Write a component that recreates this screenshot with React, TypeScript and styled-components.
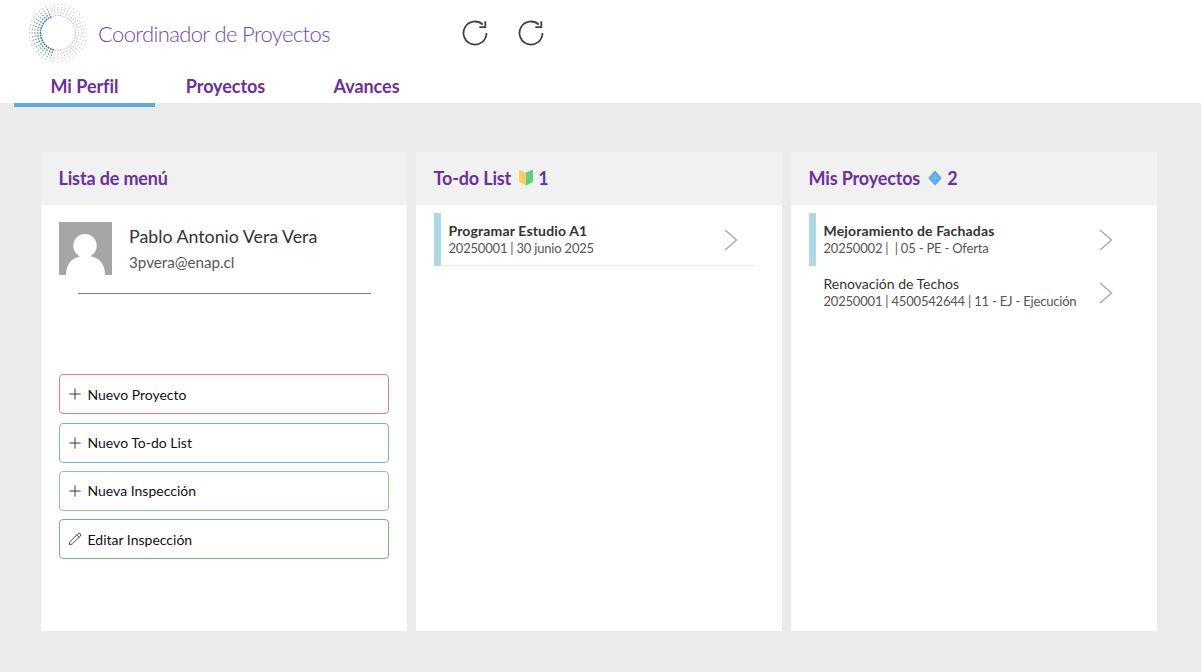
import React from "react";
import styled, { createGlobalStyle } from "styled-components";
import { Plus, Pencil } from "lucide-react";

const GlobalStyle = createGlobalStyle`
  html, body { margin:0; padding:0; background:#ebebeb; }
  body { font-family:Lato, "Noto Sans", sans-serif; }
`;

const Page = styled.div`
  width:1201px; height:672px; overflow:hidden; background:#ebebeb;
`;
const Header = styled.header`
  height:103px; background:#fff; padding-left:14px; display:flex; flex-direction:column;
`;
const Brand = styled.div`
  flex:none; height:66px; display:flex; align-items:center; padding-left:15px;
`;
const BrandTitle = styled.span`
  margin-left:11px; width:362.7px; font-size:22px; font-weight:300;
  letter-spacing:-.62px; color:#7648ab; white-space:nowrap;
`;
const IconButton = styled.span`
  width:28px; height:28px; margin-right:28.6px; display:flex; color:#444;
`;
const Tabs = styled.nav`
  flex:none; display:flex; height:41px;
`;
const Tab = styled.div<{ $active?: boolean }>`
  width:141px; height:41px; box-sizing:border-box; text-align:center; padding-top:9px;
  font-size:18px; font-weight:700; letter-spacing:-.05px; color:#6a2fa0;
  border-bottom:4px solid ${p => (p.$active ? "#5dade2" : "transparent")};
`;
const Columns = styled.main`
  display:grid; grid-template-columns:repeat(3, 366px); column-gap:9px; padding:49px 0 0 41px;
`;
const Panel = styled.section`
  height:479px; background:#fff;
`;
const PanelHead = styled.h2`
  margin:0; height:53px; box-sizing:border-box; background:#f1f1f1; display:flex; align-items:center; gap:8px;
  padding:0 0 2px 17.5px;
  font-size:18px; font-weight:700; letter-spacing:-.15px; color:#6a2fa0;
`;
const Count = styled.span`
  display:flex; align-items:center; gap:5px;
`;
const PanelBody = styled.div`
  padding:8px 18px 0;
`;
const Profile = styled.div`
  display:flex; padding-top:9px;
`;
const Avatar = styled.svg`
  width:53px; height:53px; display:block; flex:none;
`;
const ProfileText = styled.div`
  margin-left:17px;
`;
const Name = styled.div`
  font-size:17.8px; line-height:22px; margin-top:3px; color:#333;
`;
const Mail = styled.div`
  font-size:15.2px; line-height:20px; margin-top:5px; color:#555;
`;
const Divider = styled.hr`
  border:0; border-top:1px solid #6f7f7f; margin:18px 18px 80.2px 19px;
`;
const ButtonStack = styled.div`
  display:flex; flex-direction:column; gap:8.4px;
`;
const ActionButton = styled.div<{ $tone: string }>`
  height:40px; box-sizing:border-box; border:1px solid ${p => p.$tone}; border-radius:4px;
  display:flex; align-items:center; padding-left:6px; font-size:14px; color:#111;
`;
const ActionIcon = styled.span`
  width:18px; height:18px; margin-right:3.5px; flex:none; display:flex; align-items:center; justify-content:center; color:#333;
`;
const Row = styled.div<{ $bar?: boolean; $line?: boolean }>`
  position:relative; width:321px; height:53px; box-sizing:border-box;
  border-left:7px solid ${p => (p.$bar ? "#add8e6" : "transparent")};
  padding:9px 0 0 7.5px;
  ${p => p.$line && "&::after { content:''; position:absolute; left:1px; right:0; bottom:0; height:1px; background:#e3e8e8; }"}
`;
const RowTitle = styled.div<{ $strong?: boolean }>`
  font-size:14px; line-height:18px; font-weight:${p => (p.$strong ? 700 : 400)};
  letter-spacing:${p => (p.$strong ? ".15px" : "0")}; color:#333;
`;
const RowSub = styled.div`
  font-size:13px; letter-spacing:-.2px; line-height:17px; color:#555;
`;
const Chevron = styled.svg`
  position:absolute; right:17px; top:16px; width:14px; height:22px;
`;

function Logo() {
  const dots: React.ReactNode[] = [];
  const lines = 44;
  for (let ring = 0; ring < 5; ring++) {
    const r = 17.5 + ring * 2.8;
    for (let i = 0; i < lines; i++) {
      const a = (i / lines) * Math.PI * 2;
      const x = 29 + r * Math.cos(a);
      const y = 29 + r * Math.sin(a);
      // the dots are heavy and teal on the left, thin and pale on the right
      const left = Math.max(0, -Math.cos(a + 0.1));
      const color = left > 0.25 ? (y > 29 ? "#2f6f8f" : i % 2 ? "#2f8f9a" : "#54608f") : i % 3 ? "#b39cb8" : "#94a0a8";
      const size = left > 0.25 ? 0.95 - ring * 0.08 : 0.66 - ring * 0.03;
      const opacity = left > 0.25 ? 0.95 - ring * 0.11 : 0.8;
      dots.push(<circle key={`${ring}-${i}`} cx={x} cy={y} r={size} fill={color} opacity={opacity} />);
    }
  }
  return (
    <svg width="58" height="58" viewBox="0 0 58 58" style={{ flex: "none" }}>
      {dots}
    </svg>
  );
}

function Refresh() {
  return (
    <svg width="28" height="28" viewBox="0 0 28 28" fill="none" stroke="currentColor" strokeWidth="1.8">
      <path d="M21.800 5.600A11.500 11.500 0 1 0 25.500 14" />
      <path d="M24.300 2.200v6h-6" />
    </svg>
  );
}

function Arrow() {
  return (
    <Chevron viewBox="0 0 14 22" fill="none" stroke="#a8a8a8" strokeWidth="1.4">
      <path d="M1 1l11.500 10L1 21" />
    </Chevron>
  );
}

export default function App() {
  return (
    <Page>
      <GlobalStyle />
      <Header>
        <Brand>
          <Logo />
          <BrandTitle>Coordinador de Proyectos</BrandTitle>
          <IconButton><Refresh /></IconButton>
          <IconButton><Refresh /></IconButton>
        </Brand>
        <Tabs>
          <Tab $active>Mi Perfil</Tab>
          <Tab>Proyectos</Tab>
          <Tab>Avances</Tab>
        </Tabs>
      </Header>
      <Columns>
        <Panel>
          <PanelHead>Lista de menú</PanelHead>
          <PanelBody>
            <Profile>
              <Avatar viewBox="0 0 53 53">
                <rect width="53" height="53" fill="#a6a6a6" />
                <circle cx="26" cy="23.700" r="11.700" fill="#fff" />
                <path d="M7 53c0-13 8-19.300 19.500-19.300S46 40 46 53z" fill="#fff" />
              </Avatar>
              <ProfileText>
                <Name>Pablo Antonio Vera Vera</Name>
                <Mail>3pvera@enap.cl</Mail>
              </ProfileText>
            </Profile>
            <Divider />
            <ButtonStack>
              <ActionButton $tone="#e57f7f"><ActionIcon><Plus size={18} strokeWidth={1.3} /></ActionIcon>Nuevo Proyecto</ActionButton>
              <ActionButton $tone="#6db0ee"><ActionIcon><Plus size={18} strokeWidth={1.3} /></ActionIcon>Nuevo To-do List</ActionButton>
              <ActionButton $tone="#87c987"><ActionIcon><Plus size={18} strokeWidth={1.3} /></ActionIcon>Nueva Inspección</ActionButton>
              <ActionButton $tone="#6fbb6f"><ActionIcon><Pencil size={14} strokeWidth={1.5} /></ActionIcon>Editar Inspección</ActionButton>
            </ButtonStack>
          </PanelBody>
        </Panel>
        <Panel>
          <PanelHead>
            To-do List
            <Count>
              <svg width="14" height="17" viewBox="0 0 14 17">
                <path d="M7 3.500L0 .5v12.500l7 3.500z" fill="#ffd060" />
                <path d="M7 3.500L14 .5v12.500l-7 3.500z" fill="#5fd080" />
              </svg>
              1
            </Count>
          </PanelHead>
          <PanelBody>
            <Row $bar $line>
              <RowTitle $strong>Programar Estudio A1</RowTitle>
              <RowSub>20250001 | 30 junio 2025</RowSub>
              <Arrow />
            </Row>
          </PanelBody>
        </Panel>
        <Panel>
          <PanelHead>
            Mis Proyectos
            <Count>
              <svg width="14" height="16" viewBox="0 0 14 16">
                <path d="M7 1l6.300 7L7 15 .7 8z" fill="#5aa9f5" strokeLinejoin="round" stroke="#5aa9f5" />
                <path d="M7 3.500v9M3 8h8" stroke="#8cc6fa" strokeWidth=".8" />
              </svg>
              2
            </Count>
          </PanelHead>
          <PanelBody>
            <Row $bar>
              <RowTitle $strong>Mejoramiento de Fachadas</RowTitle>
              <RowSub>20250002 | &nbsp;| 05 - PE - Oferta</RowSub>
              <Arrow />
            </Row>
            <Row>
              <RowTitle>Renovación de Techos</RowTitle>
              <RowSub>20250001 | 4500542644 | 11 - EJ - Ejecución</RowSub>
              <Arrow />
            </Row>
          </PanelBody>
        </Panel>
      </Columns>
    </Page>
  );
}
